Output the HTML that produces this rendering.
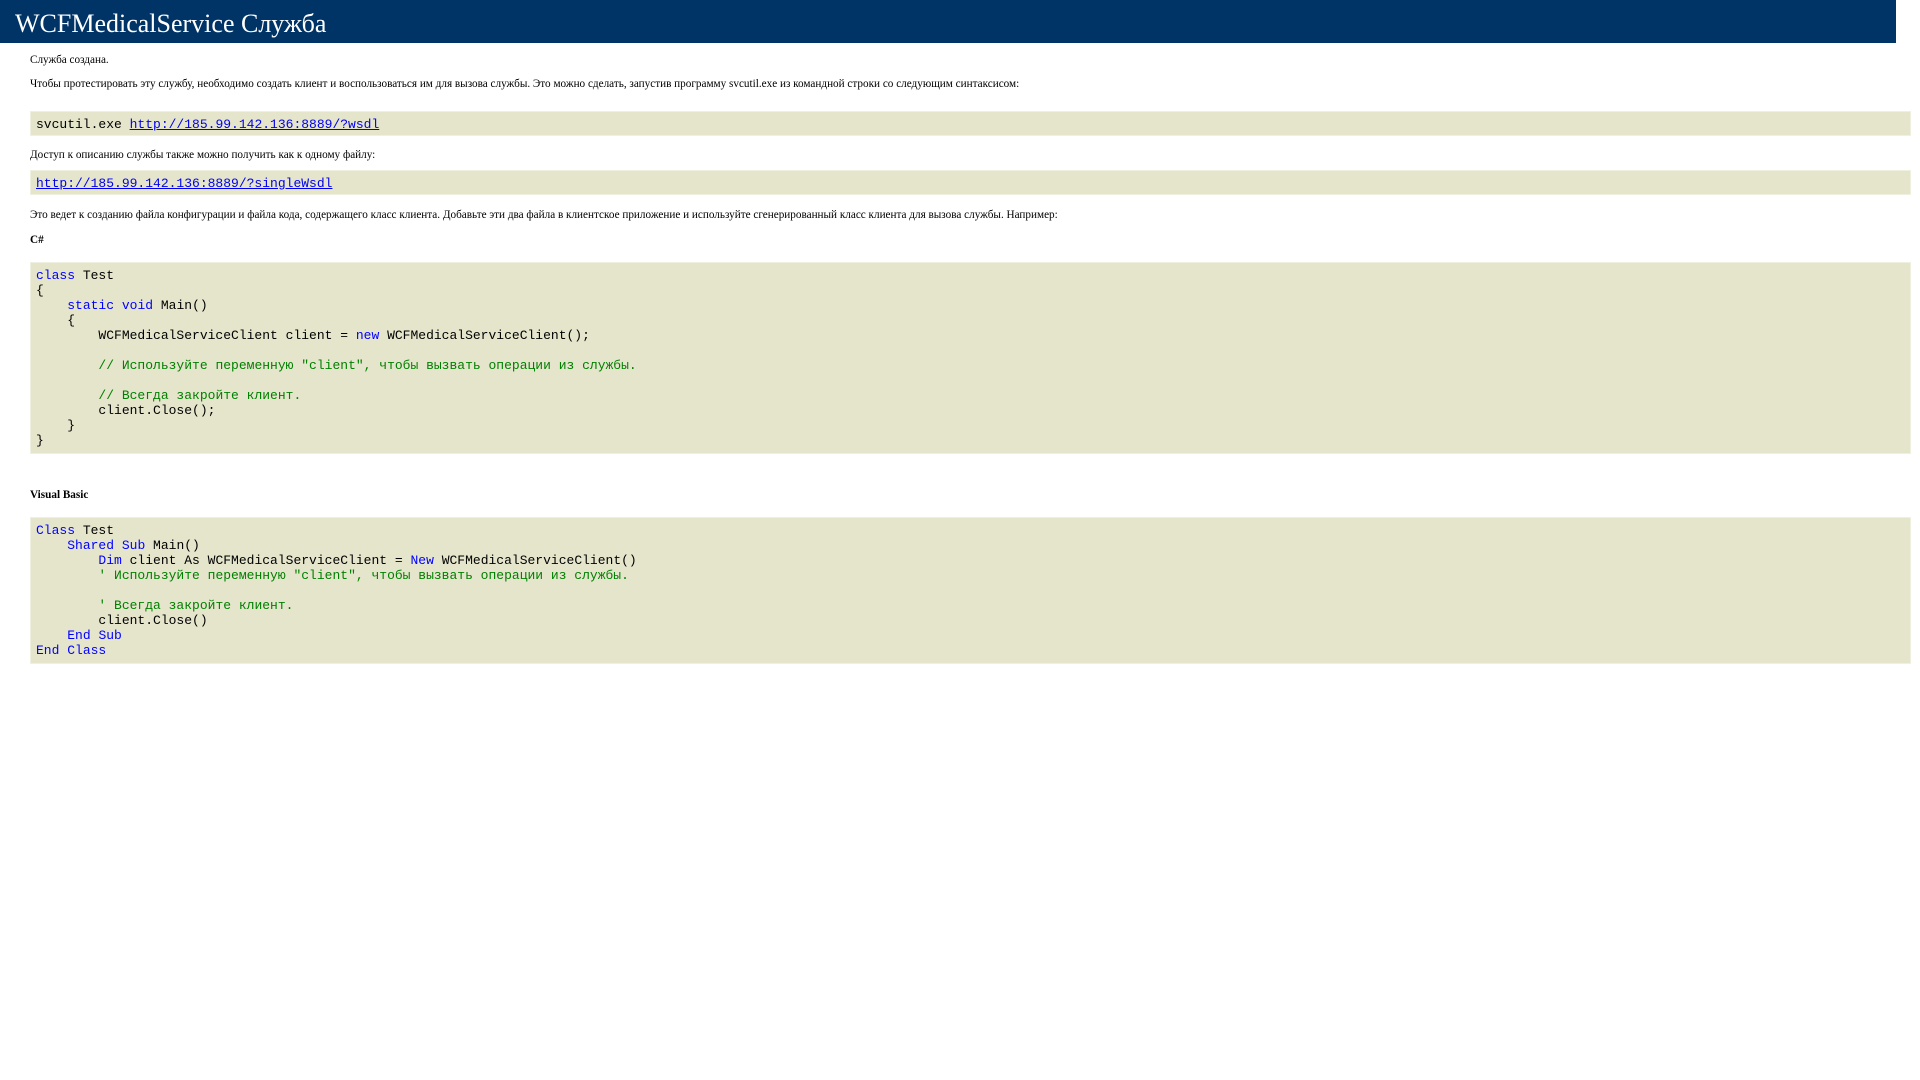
<!DOCTYPE html>
<html><head><meta charset="utf-8"><style>
body{margin:0;background:#fff;color:#000;font-family:"Liberation Serif",serif;}
.hd{position:absolute;left:0;top:0;width:1896px;height:43px;background:#003366;}
.hd div{position:absolute;left:15px;top:9px;font-size:26px;line-height:30px;color:#fff;white-space:nowrap;}
.t{position:absolute;left:30px;font-size:11.2px;line-height:14px;white-space:nowrap;}
pre{position:absolute;left:30px;width:1869px;margin:0;padding:5px;border:1px solid #f0f0e0;background:#e5e5cc;font-family:"Liberation Mono",monospace;font-size:13px;line-height:15px;}
a{color:#0000ee;}
.k{color:#0000ff;}.c{color:#008000;}
</style></head><body>
<div class="hd"><div>WCFMedicalService Служба</div></div>
<div class="t" style="top:53px">Служба создана.</div>
<div class="t" style="top:77px">Чтобы протестировать эту службу, необходимо создать клиент и воспользоваться им для вызова службы. Это можно сделать, запустив программу svcutil.exe из командной строки со следующим синтаксисом:</div>
<pre style="top:111px;height:13px;">svcutil.exe <a href="#">http://185.99.142.136:8889/?wsdl</a></pre>
<div class="t" style="top:148px">Доступ к описанию службы также можно получить как к одному файлу:</div>
<pre style="top:170px;height:13px;"><a href="#">http://185.99.142.136:8889/?singleWsdl</a></pre>
<div class="t" style="top:208px">Это ведет к созданию файла конфигурации и файла кода, содержащего класс клиента. Добавьте эти два файла в клиентское приложение и используйте сгенерированный класс клиента для вызова службы. Например:</div>
<div class="t" style="top:233px;font-weight:bold">C#</div>
<pre style="top:262px;"><span class="k">class</span> Test
{
    <span class="k">static</span> <span class="k">void</span> Main()
    {
        WCFMedicalServiceClient client = <span class="k">new</span> WCFMedicalServiceClient();

        <span class="c">// Используйте переменную "client", чтобы вызвать операции из службы.</span>

        <span class="c">// Всегда закройте клиент.</span>
        client.Close();
    }
}</pre>
<div class="t" style="top:488px;font-weight:bold">Visual Basic</div>
<pre style="top:517px;"><span class="k">Class</span> Test
    <span class="k">Shared</span> <span class="k">Sub</span> Main()
        <span class="k">Dim</span> client As WCFMedicalServiceClient = <span class="k">New</span> WCFMedicalServiceClient()
        <span class="c">' Используйте переменную "client", чтобы вызвать операции из службы.</span>

        <span class="c">' Всегда закройте клиент.</span>
        client.Close()
    <span class="k">End</span> <span class="k">Sub</span>
<span class="k">End</span> <span class="k">Class</span></pre>
</body></html>
